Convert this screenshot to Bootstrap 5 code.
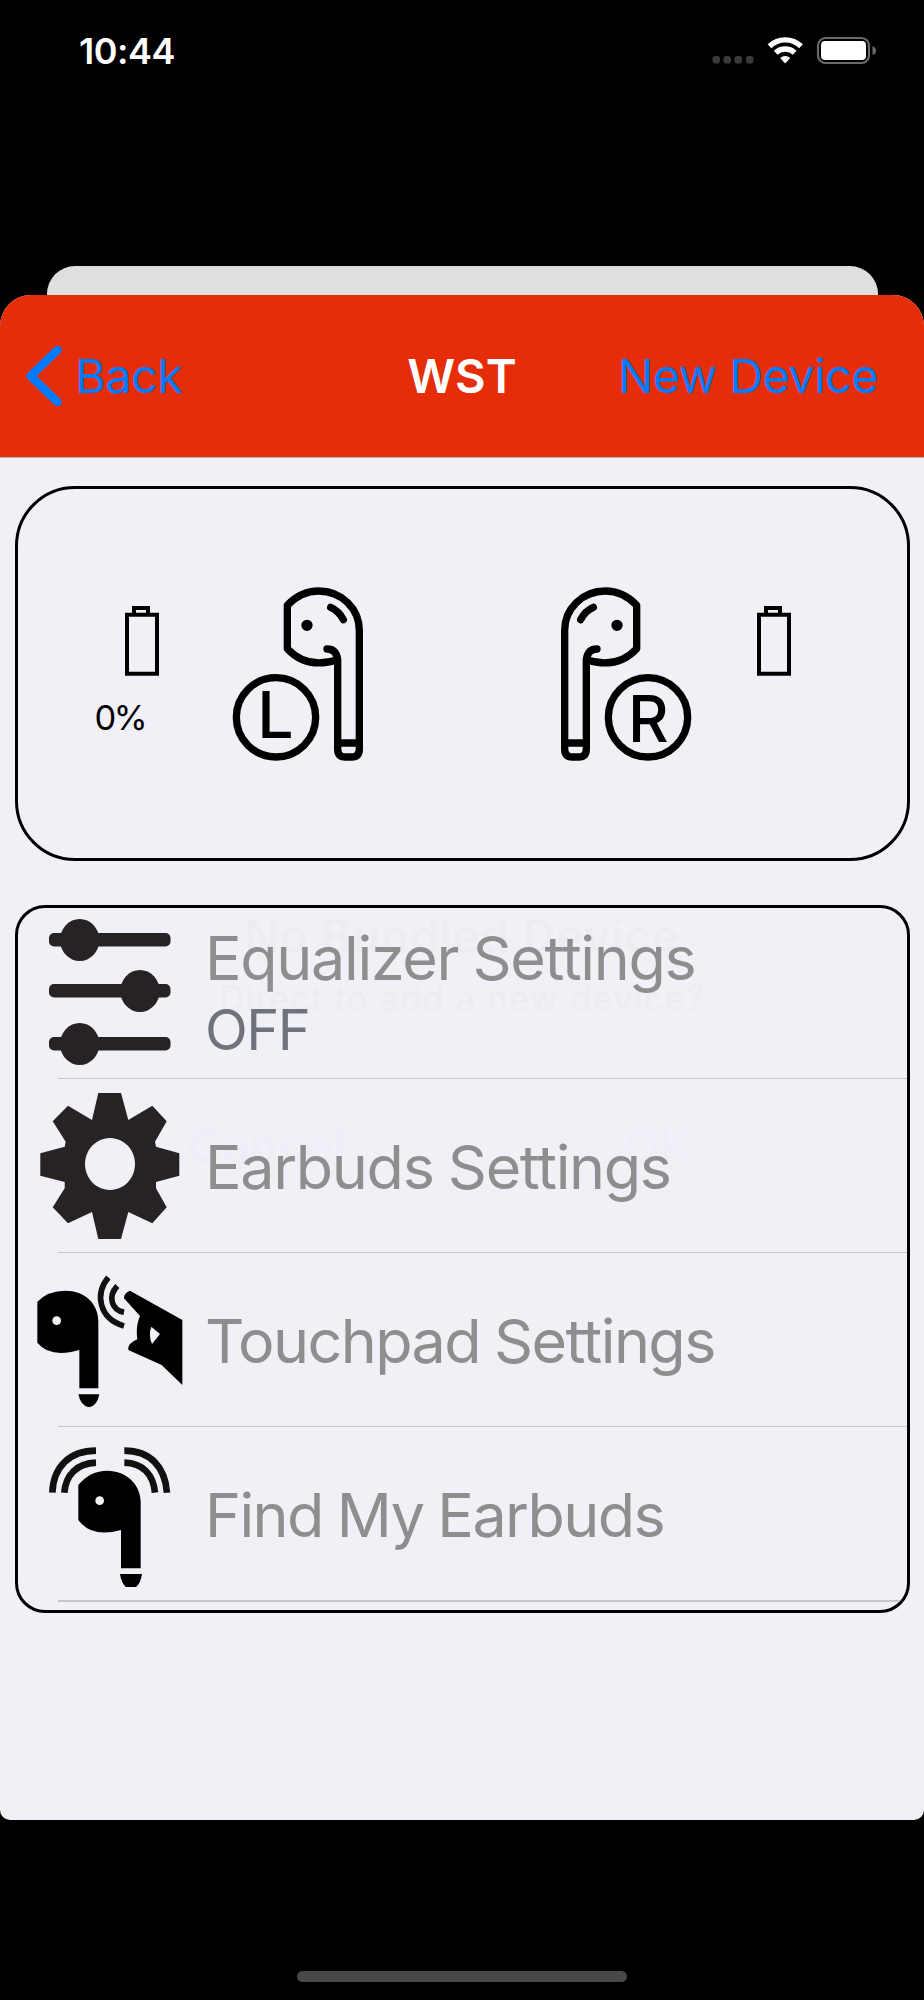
<!DOCTYPE html>
<html lang="en">
<head>
<meta charset="utf-8">
<meta name="viewport" content="width=device-width, initial-scale=1">
<title>WST</title>
<link rel="stylesheet" href="https://cdn.jsdelivr.net/npm/bootstrap@5.3.0/dist/css/bootstrap.min.css">
<style>
body{background:#000;font-family:Inter,"Liberation Sans",sans-serif;line-height:1;overflow:hidden}
svg{display:block;flex:none}
.screen{width:924px;height:2000px}
.status{height:266px;padding:31px 48px 0 79px}
.clock{font-size:36px;font-weight:600;line-height:40px;letter-spacing:-.5px}
.behind{height:29px;margin:0 46px 0 46.5px;background:#dfdfdf;border-radius:28px 28px 0 0}
.sheet{height:1525px;background:#f1f0f6;border-radius:31px 31px 10px 10px;overflow:hidden}
.topbar{display:grid;grid-template-columns:330px 1fr 330px;height:163px;font-size:47px;background:#e52d0a;border-bottom:1px solid #b9a9ae;padding-bottom:1px}
.topbar a{color:#007aff;text-decoration:none}
.back{padding-left:26px;letter-spacing:-.6px}
.back span{margin-left:13px}
.new{padding-right:46px;letter-spacing:-.6px}
.title{font-weight:600}
.panel{border:3px solid #000;margin:0 14.5px}
.buds{height:375px;margin-top:28px;border-radius:60px}
.menu{height:708px;margin-top:44px;border-radius:30px;overflow:hidden}
.bat-l{width:120px;margin:116px 16px 0 77px}
.bat-l svg{margin-left:29px}
.pct{font-size:34.5px;line-height:40px;letter-spacing:-2.5px;margin-top:22px;color:#000}
.bud-l,.bud-r{margin-top:97px}
.bud-r{margin-left:192px}
.bat-r{margin:116px 0 0 63px}
.glyph{font:500 193px Inter,sans-serif}
.entry{height:174px;padding-left:19.5px;color:#8e8e8e;font-size:61px;letter-spacing:-1.6px;word-spacing:-1.5px}
.rows{margin-top:-3px}
.texts{margin-left:22px;line-height:72px;padding-top:2px}
.two{padding-top:3px}
.loose{letter-spacing:-1.33px}
.rule{height:1px;background:#c8c7cc;margin:-1px 0 0 40px}
.rule:last-child{height:2px}
.off{font-size:56px;color:#707379;letter-spacing:-1.6px}
.ghost{inset:0;color:#edecf2;text-align:center;letter-spacing:1px;pointer-events:none}
.ghost-title{font-size:46px;font-weight:600;line-height:56px;letter-spacing:.8px}
.ghost-text{font-size:35px;line-height:68px}
.ghost-actions{font-size:47px;line-height:60px;margin:84px 54px 0;color:#edeef6;letter-spacing:0}
.home{width:330px;height:11px;border-radius:6px;background:#484848;margin:151px auto 0}
</style>
</head>
<body>
<div class="screen">
  <div class="status d-flex justify-content-between align-items-start text-white">
    <span class="clock">10:44</span>
    <svg width="166" height="40" viewBox="710 31 166 40">
      <g fill="#3a3a3a"><rect x="712.5" y="56" width="7.5" height="7.5" rx="2.8"/><rect x="723.5" y="56" width="7.5" height="7.5" rx="2.8"/><rect x="734.5" y="56" width="7.5" height="7.5" rx="2.8"/><rect x="746" y="56" width="7.5" height="7.5" rx="2.8"/></g>
      <g fill="none" stroke="#fff" stroke-width="5.4"><path d="M769.500 46.300a22.500 22.500 0 0 1 31.500 0M775.700 52.700a14 14 0 0 1 19 0"/></g>
      <path fill="#fff" d="M785.200 63.500l-5-5.500a7.500 7.500 0 0 1 10 0z"/>
      <rect x="818" y="38" width="51" height="25" rx="7.5" fill="none" stroke="#6a6a6a" stroke-width="2.2"/><rect x="821" y="41" width="45" height="19" rx="4" fill="#fff"/><path fill="#6a6a6a" d="M872.500 46q3.500 1 3.500 4.500t-3.500 4.500z"/>
    </svg>
  </div>
  <div class="behind"></div>
  <main class="sheet">
    <nav class="topbar align-items-center">
      <a href="#" class="back d-flex align-items-center"><svg width="36" height="60" viewBox="0 0 36 60"><path d="M31.500 4L4.500 30l27 26" fill="none" stroke="#007aff" stroke-width="8.500" stroke-linecap="round" stroke-linejoin="round"/></svg><span>Back</span></a>
      <span class="title text-white text-center">WST</span>
      <a href="#" class="new text-end text-nowrap">New Device</a>
    </nav>
    <section class="panel buds d-flex align-items-start">
      <div class="bat-l">
        <svg width="36" height="71" viewBox="133 107 108 213"><path fill="none" stroke="#000" stroke-width="12" d="M142 136h90v177h-90zM163 136v-20h42v20"/></svg>
        <div class="pct">0%</div>
      </div>
      <svg class="bud-l" width="135" height="177" viewBox="453 47 405 531">
        <g id="bud" fill="none" stroke="#000" stroke-width="22" stroke-linecap="round" stroke-linejoin="round"><circle cx="588" cy="441" r="119"/><path d="M741 236C757 236 770 245 773 268V535Q773 560 796 560H815Q838 560 838 535V180C838 115 785 62 716 62C680 62 647 78 622 105V235C660 276 710 288 773 268M773 518H838M752 111Q777 122 790 148"/><circle cx="681" cy="165" r="6" fill="#000"/></g>
        <text x="532" y="503" class="glyph">L</text>
      </svg>
      <svg class="bud-r" width="135" height="177" viewBox="84 47 405 531"><use href="#bud" transform="translate(942 0) scale(-1 1)"/><text x="294" y="514" class="glyph" textLength="122" lengthAdjust="spacingAndGlyphs">R</text></svg>
      <svg class="bat-r" width="36" height="71" viewBox="133 107 108 213"><path fill="none" stroke="#000" stroke-width="12" d="M142 136h90v177h-90zM163 136v-20h42v20"/></svg>
    </section>
    <section class="panel menu position-relative">
      <div class="ghost position-absolute">
        <div class="ghost-title">No Bundled Device</div>
        <div class="ghost-text">Direct to add a new device?</div>
        <div class="ghost-actions d-flex"><span class="w-50 fw-semibold">Cancel</span><span class="w-50">OK</span></div>
      </div>
      <div class="rows position-relative">
        <div class="entry loose d-flex align-items-center">
          <svg width="146" height="146" viewBox="0 0 146 146"><g fill="#272223"><rect x="12" y="14" width="121.500" height="13.500" rx="5"/><rect x="12" y="65" width="121.500" height="13.500" rx="5"/><rect x="12" y="118" width="121.500" height="13.500" rx="5"/><ellipse cx="42.700" cy="21" rx="19.700" ry="21"/><ellipse cx="103" cy="72" rx="19.700" ry="21"/><ellipse cx="42.700" cy="125" rx="19.700" ry="21"/></g></svg>
          <div class="texts two d-flex flex-column"><span>Equalizer Settings</span><span class="off">OFF</span></div>
        </div>
        <div class="rule"></div>
        <div class="entry loose d-flex align-items-center">
          <svg width="146" height="146" viewBox="0 0 146 146"><path fill="#272223" fill-rule="evenodd" d="M61.300 0H84L91.300 27L115.300 12.700L129.700 28.300L118 48.700L119 53.700L142.300 60.300V82.700L119 89V95.300L129.700 114.300L115.300 130.300L91.300 119L84 146H61.300L55 119L31 130.300L15.700 114.300L27.700 95.300V89L3.300 82.700V60.300L27.700 53.700L28.700 48.700L15.700 28.300L31 12.700L55 27ZM73 45a25 26 0 1 0 .01 0z"/></svg>
          <div class="texts">Earbuds Settings</div>
        </div>
        <div class="rule"></div>
        <div class="entry d-flex align-items-center">
          <svg width="146" height="146" viewBox="51 51 438 438">
            <path d="M52 155Q85 122 135 122C195 122 235 160 235 215V415H178V300Q90 325 52 278ZM175 433H238Q232 468 207 472Q182 468 175 433ZM330 122L487 210V405L425 345L325 300Q322 280 352 268C348 240 352 215 360 198L312 145Q312 128 330 122Z"/>
            <path d="M265 82C225 130 235 205 312 228M292 108C262 140 275 180 312 187" fill="none" stroke="#111" stroke-width="17"/>
            <path fill="#f1f0f6" d="M394 230L420 252L396 282Q384 255 394 230Z"/><circle cx="110" cy="212" r="13" fill="#f1f0f6"/>
          </svg>
          <div class="texts">Touchpad Settings</div>
        </div>
        <div class="rule"></div>
        <div class="entry d-flex align-items-center">
          <svg width="146" height="146" viewBox="51 573 438 438">
            <path d="M175 705Q210 662 262 662C320 662 362 705 362 755V955H303V840Q215 865 175 810ZM300 972H366Q362 1000 348 1011H318Q304 1000 300 972Z"/>
            <path d="M97 728C100 650 150 602 228 602M133 728C137 675 170 640 228 638M313 602C390 602 435 650 441 728M313 638C370 640 400 675 405 728" fill="none" stroke="#111" stroke-width="20"/>
            <circle cx="239" cy="752" r="13" fill="#f1f0f6"/>
          </svg>
          <div class="texts">Find My Earbuds</div>
        </div>
        <div class="rule"></div>
      </div>
    </section>
  </main>
  <div class="home"></div>
</div>
<script src="https://cdn.jsdelivr.net/npm/bootstrap@5.3.0/dist/js/bootstrap.bundle.min.js"></script>
</body>
</html>
